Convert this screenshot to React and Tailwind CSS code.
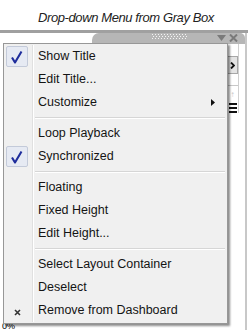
import React from "react";

const font = { fontFamily: '"Liberation Sans", Arial, sans-serif' };

const Check = () => (
    <div className="w-[22px] h-[21px] bg-[#e6eaf3] border border-[#c3cad9] rounded-[2px] flex items-center justify-center">
        <svg width="14" height="14" viewBox="0 0 14 14">
            <path d="M2 7.5 L5 12.5 L11.5 1.5" fill="none" stroke="#1f2d9c" strokeWidth="2.1" strokeLinejoin="round" />
        </svg>
    </div>
);

const Cross = () => (
    <svg width="7" height="7" viewBox="0 0 7 7">
        <path d="M1 1 L6 6 M6 1 L1 6" stroke="#333" strokeWidth="1.6" />
    </svg>
);

const Item = ({ label, icon, sub }) => (
    <div className="flex h-[23px]">
        <div className="w-[28px] shrink-0 flex items-center pl-[2px]">
            {icon === "check" && <Check />}
            {icon === "x" && <div className="w-[22px] flex justify-center pt-[4px]"><Cross /></div>}
        </div>
        <div className="w-[2px] shrink-0 flex">
            <div className="w-px bg-[#e0e0e0]" />
            <div className="w-px bg-white" />
        </div>
        <div className="flex-1 flex items-center pl-[4px] pr-[12px] text-[12.5px] text-[#141414]">
            <span className="flex-1">{label}</span>
            {sub && (
                <svg width="4" height="7" viewBox="0 0 4 7">
                    <path d="M0 0 L4 3.5 L0 7 Z" fill="#111" />
                </svg>
            )}
        </div>
    </div>
);

const Sep = () => (
    <div className="flex h-[8px]">
        <div className="w-[28px] shrink-0" />
        <div className="w-[2px] shrink-0 flex">
            <div className="w-px bg-[#e0e0e0]" />
            <div className="w-px bg-white" />
        </div>
        <div className="flex-1 flex flex-col justify-center pl-[1px] pr-[2px]">
            <div className="h-px bg-[#d6d6d6]" />
            <div className="h-px bg-white" />
        </div>
    </div>
);

const Grip = () => (
    <svg width="36" height="5" viewBox="0 0 36 5">
        {Array.from({ length: 12 }).map((_, i) => (
            <g key={i}>
                <rect x={i * 3} y="0" width="1" height="1" fill="#f4f4f4" />
                <rect x={i * 3 + 1} y="2" width="1" height="1" fill="#f4f4f4" />
                <rect x={i * 3} y="4" width="1" height="1" fill="#f4f4f4" />
            </g>
        ))}
    </svg>
);

const App = () => {
    return (
        <div className="w-[252px] h-[330px] bg-white relative overflow-hidden" style={font}>
            {/* caption */}
            <div className="h-[30px] pt-[10px] text-center italic text-[13px] leading-[15px] tracking-[-0.4px] text-[#222]">
                Drop-down Menu from Gray Box
            </div>
            <div className="h-[3px] w-[248px] bg-[#a0a0a0]" />

            {/* gray box behind */}
            <div className="flex h-[297px]">
                <div className="w-[92px] flex flex-col justify-end">
                    <div className="text-[9px] leading-[8px] text-black pl-[2px]">0%</div>
                </div>
                <div className="w-[155px] flex flex-col border-r-2 border-[#c8c8c8]">
                    <div className="h-[11px] bg-[#b6b6b6] rounded-tl-[7px] rounded-tr-[5px] flex items-start pt-[1px]">
                        <div className="ml-[60px]"><Grip /></div>
                        <svg className="ml-[29px] mt-[1px]" width="9" height="6" viewBox="0 0 9 6">
                            <path d="M0 0 L9 0 L4.5 6 Z" fill="#7a7a7a" />
                        </svg>
                        <svg className="ml-[3px]" width="9" height="8" viewBox="0 0 9 8">
                            <path d="M1 0.5 L8 7.5 M8 0.5 L1 7.5" stroke="#7a7a7a" strokeWidth="2" />
                        </svg>
                    </div>
                    <div className="flex justify-end pr-[6px]">
                        <div className="w-[12px] flex flex-col items-center border-r border-[#d0d0d0] pt-[12px]">
                            <div className="w-[11px] h-[18px] bg-[#e4e4e4] border border-[#a8a8a8] flex items-center justify-center">
                                <svg width="5" height="7" viewBox="0 0 5 7">
                                    <path d="M1 0.5 L4 3.5 L1 6.5" fill="none" stroke="#111" strokeWidth="1.8" />
                                </svg>
                            </div>
                            <div className="mt-[11px] h-px w-[11px] bg-[#c8c8c8]" />
                            <div className="mt-[5px] text-[8px] leading-[8px] text-[#bbb]">↑</div>
                            <div className="mt-[4px] flex flex-col gap-[2px]">
                                <div className="w-[8px] h-[2px] bg-[#111]" />
                                <div className="w-[8px] h-[2px] bg-[#111]" />
                                <div className="w-[8px] h-[2px] bg-[#111]" />
                            </div>
                        </div>
                    </div>
                </div>
            </div>

            {/* drop-down menu */}
            <div className="absolute left-[3px] top-[43px] w-[225px] h-[281px] bg-[#f0f0f0] border border-[#979797] py-px shadow-[2px_2px_2px_rgba(0,0,0,0.45)]">
                <Item label="Show Title" icon="check" />
                <Item label="Edit Title..." />
                <Item label="Customize" sub />
                <Sep />
                <Item label="Loop Playback" />
                <Item label="Synchronized" icon="check" />
                <Sep />
                <Item label="Floating" />
                <Item label="Fixed Height" />
                <Item label="Edit Height..." />
                <Sep />
                <Item label="Select Layout Container" />
                <Item label="Deselect" />
                <Item label="Remove from Dashboard" icon="x" />
            </div>
        </div>
    );
};

export default App;
